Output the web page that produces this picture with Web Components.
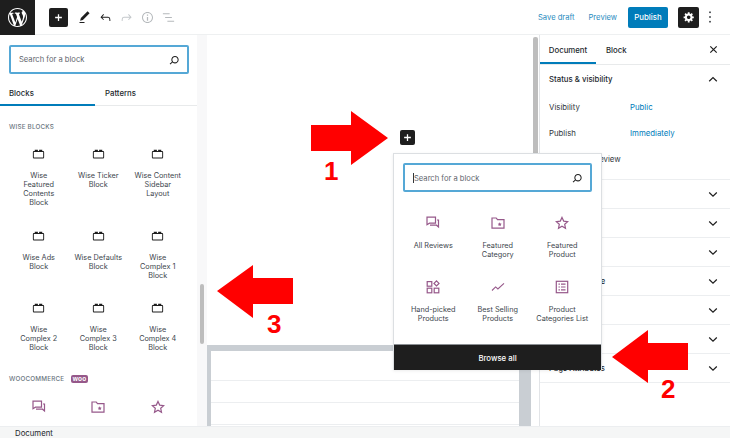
<!DOCTYPE html>
<html lang="en"><head><meta charset="utf-8"><title>Block editor</title>
<style>
html,body{margin:0;padding:0;background:#fff}
body{width:730px;height:438px;overflow:hidden;font-family:Inter,"Liberation Sans",sans-serif;font-size:7.8px;color:#32373c}
svg{display:block}
</style></head><body>
<wp-app></wp-app>
<script>
const P={
 logo:'<svg width="19" height="19" viewBox="0 0 20 20" fill="#fff"><path d="M20 10c0-5.51-4.49-10-10-10C4.48 0 0 4.49 0 10c0 5.52 4.48 10 10 10 5.51 0 10-4.48 10-10zM7.78 15.37L4.37 6.22c.55-.02 1.17-.08 1.17-.08.5-.06.44-1.13-.06-1.11 0 0-1.45.11-2.37.11-.18 0-.37 0-.58-.01C4.12 2.69 6.87 1.11 10 1.11c2.33 0 4.45.87 6.05 2.34-.68-.11-1.65.39-1.65 1.58 0 .74.45 1.36.9 2.1.35.61.55 1.36.55 2.46 0 1.49-1.4 5-1.4 5l-3.03-8.37c.54-.02.82-.17.82-.17.5-.05.44-1.25-.06-1.22 0 0-1.44.12-2.38.12-.87 0-2.33-.12-2.33-.12-.5-.03-.56 1.2-.06 1.22l.92.08 1.26 3.41zM17.41 10c.24-.64.74-1.87.43-4.25.7 1.29 1.05 2.71 1.05 4.25 0 3.29-1.73 6.24-4.4 7.78.97-2.59 1.94-5.2 2.92-7.78zM6.1 18.09C3.12 16.65 1.11 13.53 1.11 10c0-1.3.23-2.48.72-3.59C3.25 10.3 4.67 14.2 6.1 18.09zm4.03-6.63l2.58 6.98c-.86.29-1.76.45-2.71.45-.79 0-1.57-.11-2.29-.33.81-2.38 1.62-4.74 2.42-7.1z"/></svg>',
 plus:s=>`<svg width="${s}" height="${s}" viewBox="0 0 12 12"><path d="M6 1.5v9M1.5 6h9" stroke="#fff" stroke-width="1.7"/></svg>`,
 pen:'<svg width="15" height="15" viewBox="0 0 24 24" fill="#1e1e1e"><path d="M20.1 5.1L16.9 2 6.2 12.7l-1.3 4.4 4.5-1.3L20.1 5.1zM4 20.8h8v-1.5H4v1.5z"/></svg>',
 undo:c=>`<svg width="15" height="15" viewBox="0 0 24 24" fill="${c}"><path d="M18.3 11.7c-.6-.6-1.4-.9-2.3-.9H6.7l2.9-3.3-1.1-1-4.5 5L8.5 16l1-1-2.7-2.7H16c.5 0 .9.2 1.3.5 1 1 1 3.4 1 4.5v.3h1.5v-.2c0-1.5 0-4.3-1.5-5.7z"/></svg>`,
 redo:c=>`<svg width="15" height="15" viewBox="0 0 24 24" fill="${c}"><path d="M15.6 6.5l-1.1 1 2.9 3.3H8c-.9 0-1.7.3-2.3.9-1.4 1.5-1.4 4.2-1.4 5.6v.2h1.5v-.3c0-1.1 0-3.5 1-4.5.3-.3.7-.5 1.3-.5h9.2L14.5 15l1.1 1.1 4.6-4.6-4.6-5z"/></svg>`,
 info:c=>`<svg width="15" height="15" viewBox="0 0 24 24" fill="${c}"><path d="M12 3.2c-4.8 0-8.8 3.9-8.8 8.8 0 4.8 3.9 8.8 8.8 8.8 4.8 0 8.8-3.9 8.8-8.8 0-4.8-4-8.8-8.8-8.8zm0 16c-4 0-7.2-3.3-7.2-7.2C4.8 8 8 4.8 12 4.8s7.2 3.3 7.2 7.2c0 4-3.2 7.2-7.2 7.2zM11 17h2v-6h-2v6zm0-8h2V7h-2v2z"/></svg>`,
 list:c=>`<svg width="15" height="15" viewBox="0 0 24 24" fill="${c}"><path d="M13.8 5.2H3v1.5h10.8V5.2zm-3.6 12v1.5H21v-1.5H10.2zm7.2-6H6.6v1.5h10.8v-1.5z"/></svg>`,
 search:'<svg width="16" height="16" viewBox="0 0 24 24" fill="#1e1e1e"><path d="M13.5 6C10.5 6 8 8.5 8 11.5c0 1.1.3 2.1.9 3l-3.4 3 1 1.1 3.4-2.9c1 .9 2.2 1.4 3.6 1.4 3 0 5.5-2.5 5.5-5.5C19 8.5 16.5 6 13.5 6zm0 9.5c-2.2 0-4-1.8-4-4s1.8-4 4-4 4 1.8 4 4-1.8 4-4 4z"/></svg>',
 gear:'<svg width="12" height="12" viewBox="0 0 20 20" fill="#fff"><path d="M18 12h-2.18c-.17.7-.44 1.35-.81 1.93l1.54 1.54-2.1 2.1-1.54-1.54c-.58.36-1.23.63-1.91.79V19H8v-2.18c-.68-.16-1.33-.43-1.91-.79l-1.54 1.54-2.12-2.12 1.54-1.54c-.36-.58-.63-1.23-.79-1.91H1V9.03h2.17c.16-.7.44-1.35.8-1.94L2.43 5.55l2.1-2.1 1.54 1.54c.58-.37 1.24-.64 1.93-.81V2h3v2.18c.68.16 1.33.43 1.91.79l1.54-1.54 2.12 2.12-1.54 1.54c.36.59.64 1.24.8 1.94H18V12zm-8.5 1.5c1.66 0 3-1.34 3-3s-1.34-3-3-3-3 1.34-3 3 1.34 3 3 3z"/></svg>',
 dots:'<svg width="4" height="14" viewBox="0 0 4 14" fill="#32373c"><rect x="1.2" y="1.5" width="1.6" height="1.6"/><rect x="1.2" y="6.2" width="1.6" height="1.6"/><rect x="1.2" y="10.900" width="1.6" height="1.6"/></svg>',
 close:'<svg width="9" height="9" viewBox="0 0 9 9"><path d="M1.3 1.3l6.4 6.4M7.700 1.3L1.300 7.700" stroke="#1e1e1e" stroke-width="1.2" fill="none"/></svg>',
 down:'<svg width="10" height="7" viewBox="0 0 10 7"><path d="M1.200 1.500L5 5.200l3.800-3.700" stroke="#1e1e1e" stroke-width="1.200" fill="none"/></svg>',
 up:'<svg width="10" height="7" viewBox="0 0 10 7"><path d="M1.200 5.200L5 1.500l3.800 3.700" stroke="#1e1e1e" stroke-width="1.200" fill="none"/></svg>',
 block:'<svg width="15" height="15" viewBox="0 0 24 24" fill="#1e1e1e"><path d="M19 8h-1V6h-5v2h-2V6H6v2H5c-1.100 0-2 .9-2 2v8c0 1.100.9 2 2 2h14c1.100 0 2-.9 2-2v-8c0-1.100-.9-2-2-2zm.5 10c0 .3-.2.5-.5.5H5c-.3 0-.5-.2-.5-.5v-8c0-.3.2-.5.5-.5h14c.3 0 .5.2.5.5v8z"/></svg>',
 review:'<svg width="14" height="14" viewBox="0 0 14 14" fill="none" stroke="#96588a" stroke-width="1.200"><path d="M1 1.200h8.500v6H3.500L1 8.700z"/><path d="M4 9.200h6.500l2 1.800V4h-1.500"/></svg>',
 folder:'<svg width="14" height="14" viewBox="0 0 14 14" fill="none" stroke="#96588a" stroke-width="1.200"><path d="M1 2h4.200l1.300 1.700H13V12.200H1z"/><path d="M8.700 6.200l.6 1.300 1.400.2-1 1 .2 1.400-1.200-.7-1.200.7.2-1.400-1-1 1.400-.2z" fill="#96588a" stroke="none"/></svg>',
 star:'<svg width="14" height="14" viewBox="0 0 14 14" fill="none" stroke="#96588a" stroke-width="1.200"><path d="M7 1.400l1.700 3.700 4 .5-3 2.700.8 4L7 10.300l-3.500 2 .8-4-3-2.700 4-.5z"/></svg>',
 hand:'<svg width="14" height="14" viewBox="0 0 14 14" fill="none" stroke="#96588a" stroke-width="1.200"><rect x="1.200" y="1.600" width="4.600" height="4.600"/><rect x="1.200" y="8.200" width="4.600" height="4.600"/><rect x="8.200" y="8.200" width="4.600" height="4.600"/><path d="M10.500 .9l2.500 2.500-2.500 2.500L8 3.400z"/></svg>',
 trend:'<svg width="14" height="14" viewBox="0 0 14 14" fill="none" stroke="#96588a" stroke-width="1.100"><path d="M1 10.500l3.600-3.600 2.300 2.100L13 3.300"/></svg>',
 cats:'<svg width="14" height="14" viewBox="0 0 14 14" fill="none" stroke="#96588a" stroke-width="1.200"><rect x="1.300" y="1.300" width="11.400" height="11.400"/><path d="M3.500 4.200h1.400M6 4.200h4.500M3.500 7h1.400M6 7h4.500M3.500 9.800h1.400M6 9.800h4.500"/></svg>'
};
function def(name,css,html){
 customElements.define(name,class extends HTMLElement{
  constructor(){super();const r=this.attachShadow({mode:'open'});r.innerHTML=`<style>${css}</style>`+(typeof html==='function'?html(this):html);}
 });
}
def('wp-icon-btn',':host{display:flex;align-items:center;justify-content:center;width:21px;height:21px}','<slot></slot>');
def('wp-search',`:host{display:flex;align-items:center;box-sizing:border-box;height:29px;border:2px solid #55a8d6;border-radius:2px;padding:0 5px 0 8px;background:#fff;font-size:7.600px;color:#5f666d}
 span{flex:1}`,`<span><slot></slot></span>${P.search}`);
def('wp-block-item',`:host{display:flex;flex-direction:column;align-items:center;box-sizing:border-box;text-align:center;font-size:7.300px;line-height:9px;color:#40464d;padding:0 0 16.500px}
 .i{height:26px;display:flex;align-items:center;justify-content:center;margin-bottom:3.500px}`,`<div class="i"><slot name="icon"></slot></div><div><slot></slot></div>`);
def('wp-panel-row',`:host{display:flex;align-items:center;justify-content:space-between;box-sizing:border-box;height:29px;padding:0 12px 0 9px;border-top:1px solid #eceef0;font-weight:500;font-size:7.600px;color:#23282d}`,`<span><slot></slot></span>${P.down}`);
def('wp-kv',`:host{display:flex;align-items:center;height:26px;padding-left:9px;font-size:7.800px;color:#32373c}
 span{width:81px}b{font-weight:400;color:#007cba}`,t=>`<span>${t.getAttribute('k')}</span><b>${t.getAttribute('v')}</b>`);
def('wp-red-arrow',`:host{position:absolute;display:block;line-height:1}
 svg{position:absolute;left:0;top:0}
 span{position:absolute;font:700 26px "Liberation Sans",sans-serif;color:#f00;line-height:26px}`,t=>{
  const pts=t.getAttribute('pts');const w=t.getAttribute('w'),h=t.getAttribute('h');
  return `<svg width="${w}" height="${h}"><polygon points="${pts}" fill="#f00"/></svg><span style="left:${t.getAttribute('nx')}px;top:${t.getAttribute('ny')}px">${t.getAttribute('n')}</span>`;});
def('wp-topbar',`:host{display:flex;align-items:center;height:35px;box-sizing:border-box;border-bottom:1px solid #eef0f1;padding-right:14px;background:#fff}
 .logo{width:35px;height:35px;background:#1e1e1e;display:flex;align-items:center;justify-content:center;margin-right:14px}
 .add{width:19px;height:19px;background:#1e1e1e;border-radius:2px;display:flex;align-items:center;justify-content:center;margin-right:6px}
 .sp{flex:1}
 .link{color:#2a8cc0;font-size:7.600px}
 .pub{width:40px;height:21px;background:#007cba;color:#fff;border-radius:2px;display:flex;align-items:center;justify-content:center;font-size:7.800px;font-weight:500;margin:0 10px 0 11px}
 .gear{width:21px;height:21px;background:#1e1e1e;border-radius:2px;display:flex;align-items:center;justify-content:center;margin-right:5px}
 .mid{margin-left:14px}`,
 `<div class="logo">${P.logo}</div><div class="add">${P.plus(9)}</div>
 <wp-icon-btn>${P.pen}</wp-icon-btn><wp-icon-btn>${P.undo('#1e1e1e')}</wp-icon-btn><wp-icon-btn>${P.redo('#c4c8cb')}</wp-icon-btn><wp-icon-btn>${P.info('#b5b9bc')}</wp-icon-btn><wp-icon-btn>${P.list('#b5b9bc')}</wp-icon-btn>
 <div class="sp"></div><span class="link">Save draft</span><span class="link mid">Preview</span><div class="pub">Publish</div><div class="gear">${P.gear}</div><wp-icon-btn style="width:12px">${P.dots}</wp-icon-btn>`);
const it=(icon,t)=>`<wp-block-item><span slot="icon">${P[icon]}</span>${t}</wp-block-item>`;
def('wp-inserter',`:host{display:flex;flex-direction:column;width:197px;background:#fff;overflow:hidden;flex:none}
 .s{padding:10px 8px 0 9px}
 .tabs{display:flex;height:32px;flex:none;box-sizing:border-box;border-bottom:1px solid #e8eaeb;font-weight:500;font-size:7.800px;color:#23282d}
 .tabs div{display:flex;align-items:center;padding:7px 0 0 9px;box-sizing:border-box;width:95px}
 .tabs .on{border-bottom:2px solid #007cba;height:32px}
 .tabs div+div{padding-left:10px;width:102px}
 h3{margin:0;font-size:6.300px;font-weight:500;color:#6c7781;letter-spacing:.2px;padding-left:9px;display:flex;align-items:center;gap:7px;height:28px;flex:none}
 .woo{background:#96588a;color:#fff;font:700 6.500px/8px "Liberation Sans",sans-serif;padding:0 1.500px;border-radius:2px}
 .g{display:grid;grid-template-columns:repeat(3,59.500px);padding:0 0 0 9px;flex:none}`,
 `<div class="s"><wp-search>Search for a block</wp-search></div>
 <div class="tabs"><div class="on">Blocks</div><div>Patterns</div></div>
 <h3 style="margin-top:7px">WISE BLOCKS</h3>
 <div class="g">
 ${it('block','Wise<br>Featured<br>Contents<br>Block')}${it('block','Wise Ticker<br>Block')}${it('block','Wise Content<br>Sidebar<br>Layout')}
 ${it('block','Wise Ads<br>Block')}${it('block','Wise Defaults<br>Block')}${it('block','Wise<br>Complex 1<br>Block')}
 </div>
 <div class="g" style="margin-top:-1px">
 ${it('block','Wise<br>Complex 2<br>Block')}${it('block','Wise<br>Complex 3<br>Block')}${it('block','Wise<br>Complex 4<br>Block')}
 </div>
 <h3 style="margin-top:-3px">WOOCOMMERCE <span class="woo">woo</span></h3>
 <div class="g" style="margin-top:2px">${it('review','')}${it('folder','')}${it('star','')}</div>`);
def('wp-canvas',`:host{display:flex;flex:none;width:342px;background:#fff;overflow:hidden}
 .track{width:10px;background:#f8f8f9;flex:none;padding:249px 0 0 3px;box-sizing:border-box}
 .thumb{width:4px;height:60px;background:#bdbdbd;border-radius:2px}
 .c{flex:1;display:flex;flex-direction:column;min-width:0}
 .top{height:310px;flex:none;padding:95px 0 0 193px;box-sizing:border-box}
 .mini{width:15px;height:15px;background:#1e1e1e;border-radius:2px;display:flex;align-items:center;justify-content:center}
 .t{flex:1;border:solid #c9ced3;border-width:6px 12px 0 4px;box-sizing:border-box;display:flex;flex-direction:column}
 .t div{height:22px;flex:none;box-sizing:border-box;border-bottom:1.500px solid #eceef0}
 .t div:first-child{height:30px}
 .rt{flex:none;width:8px;padding:2px 0 0 2px;box-sizing:border-box}
 .rt i{display:block;width:4.500px;height:280px;background:#bdbdbd;border-radius:2px}`,
 `<div class="track"><div class="thumb"></div></div>
 <div class="c"><div class="top"><div class="mini">${P.plus(9)}</div></div><div class="t"><div></div><div></div><div></div></div></div>
 <div class="rt"><i></i></div>`);
def('wp-sidebar',`:host{display:flex;flex-direction:column;flex:1;min-width:0;background:#fff;border-left:1px solid #e2e4e7;overflow:hidden;box-sizing:border-box}
 .tabs{display:flex;align-items:center;height:29px;border-bottom:1px solid #e8eaeb;font-weight:500;font-size:7.800px;color:#23282d;padding-right:12px;flex:none}
 .on{width:56px;box-sizing:border-box;height:29px;display:flex;align-items:center;justify-content:center;box-shadow:inset 0 -2px 0 #007cba}
 .tb{margin-left:10px;flex:1}
 .head{display:flex;align-items:center;justify-content:space-between;height:28px;margin-bottom:1px;padding:0 12px 0 9px;font-weight:500;font-size:7.800px;color:#23282d;flex:none}
 .pend{display:flex;align-items:center;height:26px;margin:0 0 7px;padding-left:10px;gap:3px;color:#32373c;font-size:7.800px;flex:none}
 .box{width:11px;height:11px;border:1px solid #6c7781;box-sizing:border-box;border-radius:1px}`,
 `<div class="tabs"><div class="on">Document</div><div class="tb">Block</div>${P.close}</div>
 <div class="head">Status &amp; visibility ${P.up}</div>
 <wp-kv k="Visibility" v="Public"></wp-kv><wp-kv k="Publish" v="Immediately"></wp-kv>
 <div class="pend"><div class="box"></div>Pending review</div>
 <wp-panel-row></wp-panel-row><wp-panel-row></wp-panel-row><wp-panel-row></wp-panel-row><wp-panel-row>Featured image</wp-panel-row><wp-panel-row></wp-panel-row><wp-panel-row></wp-panel-row><wp-panel-row>Page Attributes</wp-panel-row>
 <div style="border-top:1px solid #eceef0"></div>`);
def('wp-popover',`:host{position:absolute;left:393px;top:153px;width:209px;height:217px;box-sizing:border-box;background:#fff;border:1px solid #dcdfe2;border-bottom:0;display:flex;flex-direction:column;box-shadow:0 1px 3px rgba(0,0,0,.08)}
 .s{padding:9px 9px 0 9px}
 .g{display:grid;grid-template-columns:repeat(3,64.500px);grid-auto-rows:64px;padding:19px 0 0 7px}
 .b{margin-top:auto;height:26px;background:#1e1e1e;border-top:1px solid #8b8f93;color:#fff;font-weight:500;font-size:7.800px;display:flex;align-items:center;justify-content:center;box-sizing:border-box}
 .caret{display:inline-block;width:1px;height:10px;background:#32373c;vertical-align:-2px}`,
 `<div class="s"><wp-search><span class="caret"></span>Search for a block</wp-search></div>
 <div class="g">${it('review','All Reviews')}${it('folder','Featured<br>Category')}${it('star','Featured<br>Product')}${it('hand','Hand-picked<br>Products')}${it('trend','Best Selling<br>Products')}${it('cats','Product<br>Categories List')}</div>
 <div class="b">Browse all</div>`);
def('wp-app',`:host{display:flex;flex-direction:column;position:relative;width:730px;height:438px;overflow:hidden}
 .m{display:flex;height:391px;flex:none}
 .f{flex:1;background:#f5f6f6;border-top:1px solid #eceef0;display:flex;align-items:center;padding-left:15px;font-size:7.800px;color:#23282d}`,
 `<wp-topbar></wp-topbar><div class="m"><wp-inserter></wp-inserter><wp-canvas></wp-canvas><wp-sidebar></wp-sidebar></div><div class="f">Document</div>
 <wp-popover></wp-popover>
 <wp-red-arrow style="left:311px;top:111px" w="78" h="55" n="1" nx="13" ny="47" pts="0,14 40,14 40,0 77,27 40,54 40,40 0,40"></wp-red-arrow>
 <wp-red-arrow style="left:612px;top:330px" w="77" h="54" n="2" nx="49" ny="46" pts="0,27 36,0 36,13 76,13 76,40 36,40 36,53"></wp-red-arrow>
 <wp-red-arrow style="left:217px;top:265px" w="77" h="54" n="3" nx="50" ny="46" pts="0,26 36,0 36,13 76,13 76,39 36,39 36,53"></wp-red-arrow>`);
</script>
</body></html>
